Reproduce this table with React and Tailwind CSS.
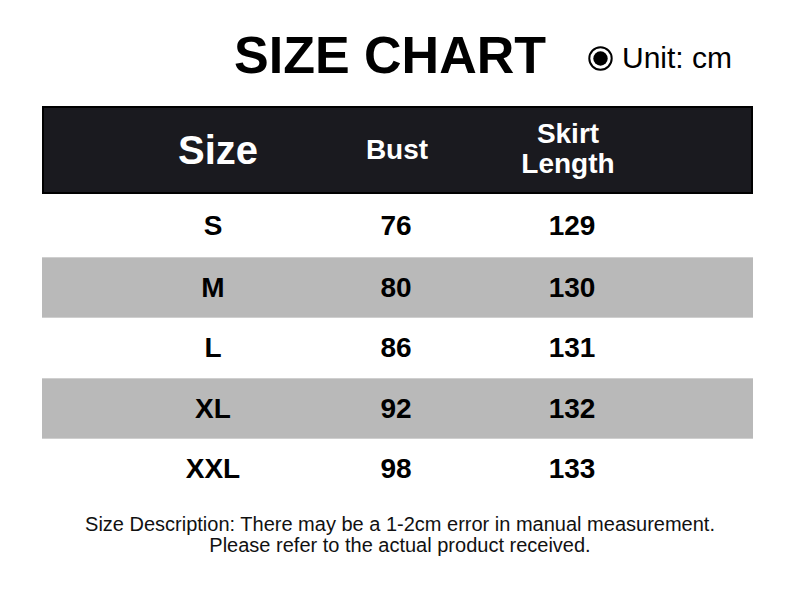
const rows = [
  { size: "S", bust: "76", length: "129" },
  { size: "M", bust: "80", length: "130" },
  { size: "L", bust: "86", length: "131" },
  { size: "XL", bust: "92", length: "132" },
  { size: "XXL", bust: "98", length: "133" },
];

export default function App() {
  return (
    <div
      className="w-[800px] h-[600px] bg-white text-black overflow-hidden"
      style={{ fontFamily: '"Liberation Sans", Arial, sans-serif' }}
    >
      {/* Title */}
      <div className="flex items-center pt-[14px] h-[106px] pb-[10px]">
        <h1 className="ml-[234px] text-[52px] font-bold leading-none">SIZE CHART</h1>
        <div className="ml-[42px] flex items-center mt-[6px]">
          <svg width="25" height="25" viewBox="0 0 25 25">
            <circle cx="12.5" cy="12.5" r="11.2" fill="none" stroke="#000" strokeWidth="2" />
            <circle cx="12.5" cy="12.5" r="7.2" fill="#000" />
          </svg>
          <span className="ml-[9px] text-[30px] leading-none">Unit: cm</span>
        </div>
      </div>

      {/* Table */}
      <div className="ml-[42px] w-[711px]">
        <div className="flex items-center h-[88px] bg-[#1a1a1f] border-2 border-black text-white font-bold">
          <div className="ml-[114px] w-[120px] text-center text-[40px] leading-none">Size</div>
          <div className="ml-[59px] w-[120px] text-center text-[28px] leading-none">Bust</div>
          <div className="ml-[51px] w-[120px] text-center text-[28px] leading-[30px] pb-[2px]">
            Skirt
            <br />
            Length
          </div>
        </div>
        {rows.map((r, i) => (
          <div
            key={r.size}
            className={`flex items-center font-bold text-[28px] leading-none ${
              i === 0 ? "h-[63px]" : i % 2 === 1 ? "h-[61px]" : "h-[60px]"
            } ${i % 2 === 1 ? "bg-[#b9b9b9] border-y border-[#cfcfcf]" : ""}`}
          >
            <div className="ml-[111px] w-[120px] text-center">{r.size}</div>
            <div className="ml-[63px] w-[120px] text-center">{r.bust}</div>
            <div className="ml-[56px] w-[120px] text-center">{r.length}</div>
          </div>
        ))}
      </div>

      {/* Note */}
      <div className="mt-[15px] text-center text-[20px] leading-[21px] text-[#111]">
        <p>Size Description: There may be a 1-2cm error in manual measurement.</p>
        <p>Please refer to the actual product received.</p>
      </div>
    </div>
  );
}
